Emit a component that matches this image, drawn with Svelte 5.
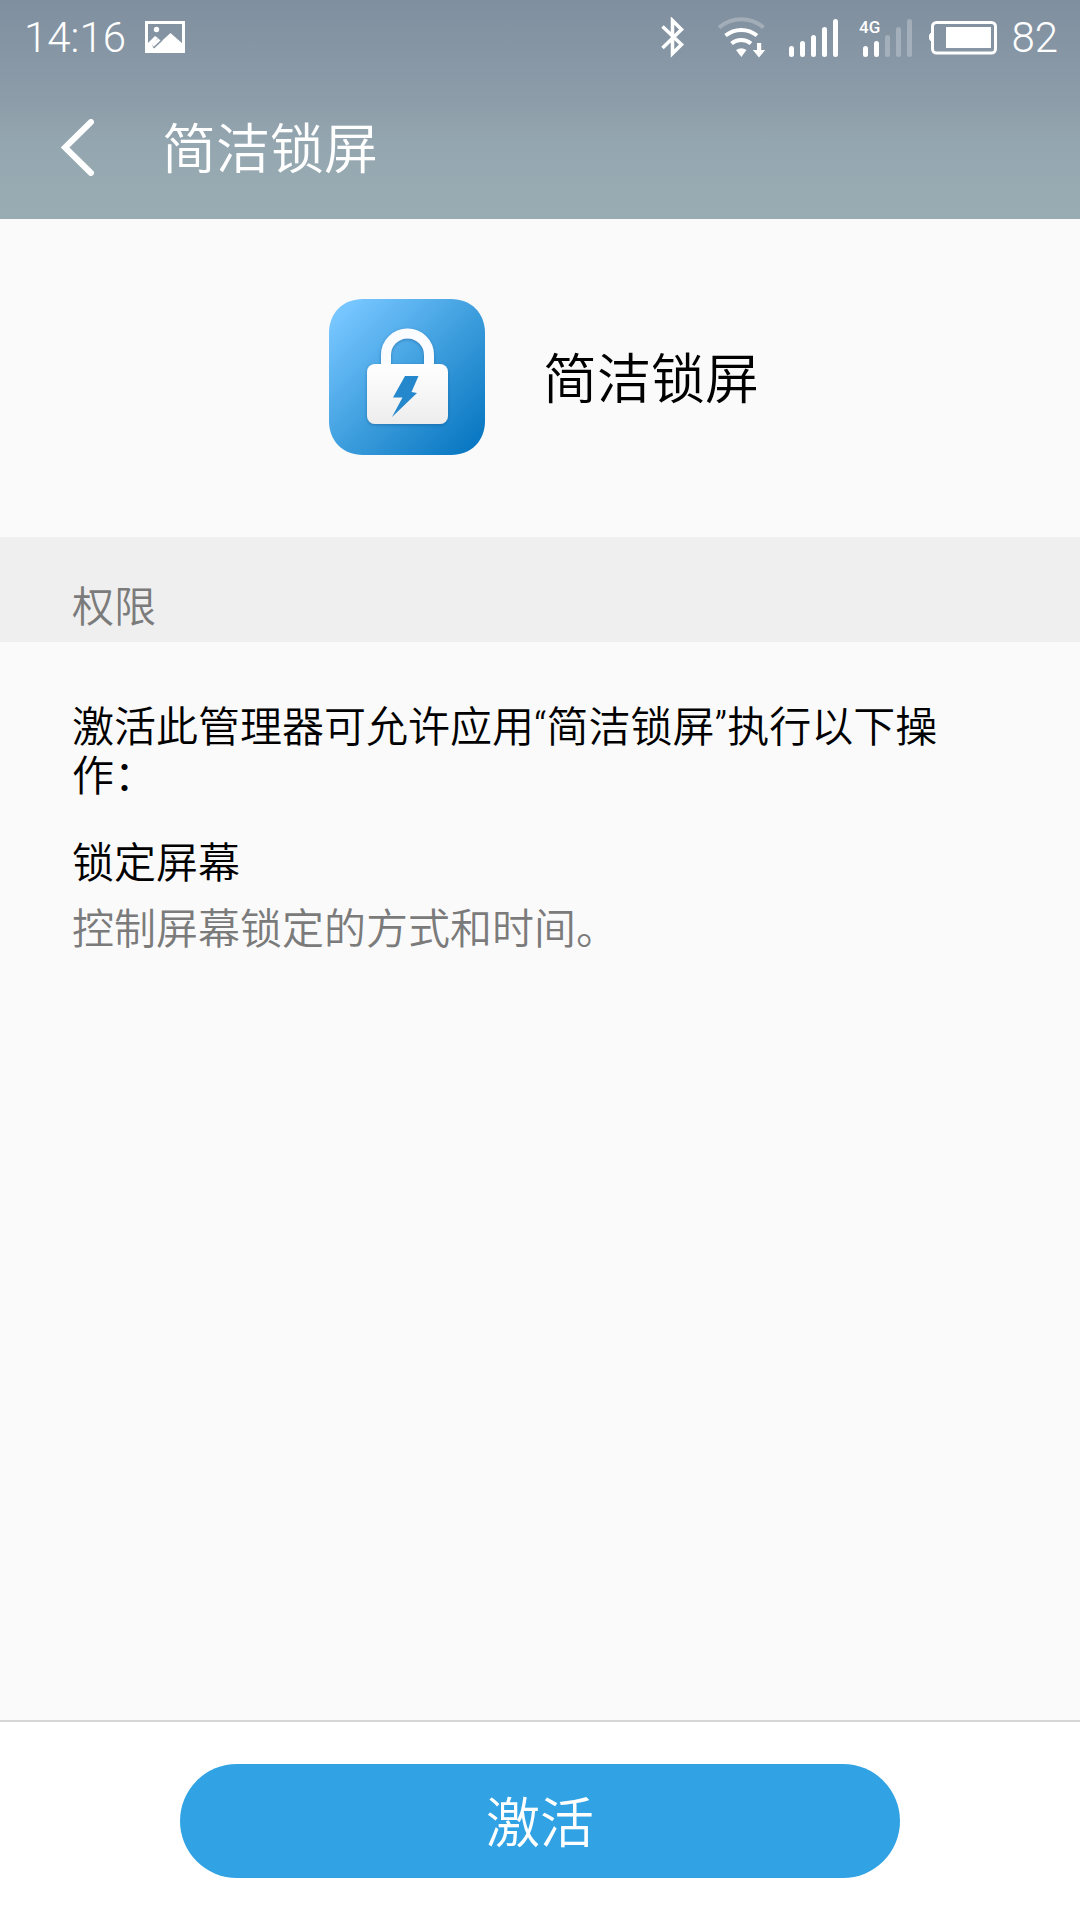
<script>
  const appName = '简洁锁屏';
  const battery = 82;
  const bars = [29, 24, 18, 10, 2];
  const policies = [{ title: '锁定屏幕', detail: '控制屏幕锁定的方式和时间。' }];
  let active = $state(false);
</script>

<div class="screen" lang="zh-CN">
  <header>
    <div class="status">
      <div class="group">
        <time>14:16</time>
        <svg width="40" height="33" viewBox="0 0 40 33" role="img" aria-label="截图">
          <path d="M1.5 1.5h37v29h-37z" fill="none" stroke="#fff" stroke-width="3" />
          <circle cx="11.5" cy="8.5" r="2.7" fill="#fff" />
          <path d="M2 23L10 15L13 17L7 24.500L9 27L25.500 12L38 23V31H2z" fill="#fff" />
          <path d="M14.500 18.500L8 25" stroke="#fff" stroke-width="3.500" />
          <path d="M17 19L8.500 27" stroke="#8594a3" stroke-width="1.500" />
        </svg>
      </div>
      <div class="group battery">
        <div class="group icons">
          <svg width="40" height="41" viewBox="0 0 40 41" role="img" aria-label="蓝牙">
            <path d="M1.500 9.500L20.500 27.500L11.500 36.500V3.500L20.500 12.500L1.500 31" fill="none" stroke="#fff" stroke-width="3.500" />
          </svg>
          <svg width="56" height="41" viewBox="0 0 56 41" role="img" aria-label="无线网络">
            <g fill="none" stroke="#fff" stroke-width="4">
              <path d="M2 10.500A34 34 0 0 1 46.500 10.500" opacity=".25" />
              <path d="M8.500 18.500A25 25 0 0 1 40 18.500" />
              <path d="M14.500 26.500A15 15 0 0 1 34 26.500" />
            </g>
            <path d="M19 33Q24.300 29.500 29.500 33L24.300 40z" fill="#fff" />
            <path d="M40 26h4.200v7h4L42 40.500L35.800 33h4.200z" fill="#fff" />
          </svg>
          <svg width="54" height="41" viewBox="0 0 54 41" role="img" aria-label="信号">
            {#each bars as top, i}
              <rect x={i * 11} y={top} width="5" height={40 - top} rx="2.5" fill="#fff" />
            {/each}
          </svg>
          <svg width="54" height="41" viewBox="0 0 54 41" role="img" aria-label="4G 信号">
            <text class="net" x="0" y="16">4G</text>
            {#each bars as top, i}
              <rect x={4 + i * 11} y={top} width="5" height={40 - top} rx="2.5" fill="#fff" opacity={i < 2 ? 1 : 0.25} />
            {/each}
          </svg>
          <svg width="68" height="41" viewBox="0 0 68 41" role="img" aria-label="电池">
            <rect x="3.5" y="5.5" width="63" height="30.5" rx="4" fill="none" stroke="#fff" stroke-width="3" />
            <path d="M3 16H1.500L0 18v4l1.500 2H3z" fill="#fff" />
            <rect x="17" y="10" width="45" height="21" fill="#fff" />
          </svg>
        </div>
        <span>{battery}</span>
      </div>
    </div>
    <div class="titlebar">
      <button class="back" type="button" aria-label="返回">
        <svg width="34" height="57" viewBox="0 0 34 57" aria-hidden="true">
          <path d="M30 3L4 28.500L30 54" fill="none" stroke="#fff" stroke-width="6" stroke-linecap="round" />
        </svg>
      </button>
      <h1>{appName}</h1>
    </div>
  </header>

  <main>
    <section class="app">
      <svg width="156" height="156" viewBox="0 0 156 156" aria-hidden="true">
        <defs>
          <linearGradient id="tile" x1="0" y1="0" x2="1" y2="1">
            <stop offset="0.08" stop-color="#77c6ff" />
            <stop offset="0.5" stop-color="#3f9fde" />
            <stop offset="0.92" stop-color="#0b79c3" />
          </linearGradient>
          <linearGradient id="body" x1="0" y1="0" x2="0" y2="1">
            <stop offset="0" stop-color="#fff" />
            <stop offset="1" stop-color="#ededee" />
          </linearGradient>
          <filter id="shade" x="-20%" y="-20%" width="140%" height="140%">
            <feDropShadow dx="0" dy="1" stdDeviation="1.500" flood-color="#0a4f86" flood-opacity=".5" />
          </filter>
        </defs>
        <path d="M34 0H122C142 0 156 14 156 34V122C156 142 142 156 122 156H34C14 156 0 142 0 122V34C0 14 14 0 34 0z" fill="url(#tile)" />
        <g filter="url(#shade)">
          <path d="M57 68V56A21.500 21.500 0 0 1 100 56V68" fill="none" stroke="#fbfcff" stroke-width="10" />
          <rect x="38" y="65" width="81" height="60" rx="8" fill="url(#body)" />
        </g>
        <path d="M76 77H89.500L82.500 93L88 94L63 118L73.500 98.500H64z" fill="#2588cc" />
      </svg>
      <h2>{appName}</h2>
    </section>

    <h3>权限</h3>

    <section class="details">
      <p class="intro">激活此管理器可允许应用“{appName}”执行以下操作：</p>
      <dl>
        {#each policies as policy}
          <dt>{policy.title}</dt>
          <dd>{policy.detail}</dd>
        {/each}
      </dl>
    </section>
  </main>

  <footer>
    <button class="activate" type="button" aria-pressed={active} onclick={() => (active = !active)}>激活</button>
  </footer>
</div>

<style>
  :global(body) {
    margin: 0;
    background: #fafafa;
  }
  .screen {
    display: flex;
    flex-direction: column;
    min-height: 100vh;
    color: #000;
    font-family: Roboto, 'Noto Sans CJK SC', sans-serif;
    font-size: 42px;
    font-weight: 350;
    line-height: 49px;
  }
  svg {
    display: block;
    flex: none;
  }
  h1,
  h2,
  h3,
  p,
  dl,
  dd {
    margin: 0;
    font-weight: 350;
  }
  header {
    background: linear-gradient(#808f9f, #8c9ca9 45%, #94a6af 65%, #9aacb3);
    color: #fff;
  }
  .status {
    display: flex;
    justify-content: space-between;
    align-items: center;
    height: 75px;
    padding: 0 22px 0 24px;
    font-weight: 300;
  }
  .group {
    display: flex;
    align-items: center;
    gap: 19px;
  }
  .icons {
    gap: 16px;
  }
  .battery {
    gap: 14px;
  }
  .net {
    fill: #fff;
    font-size: 17px;
    font-weight: 500;
  }
  .titlebar {
    display: flex;
    align-items: center;
    height: 144px;
    padding-left: 37px;
    gap: 43px;
  }
  .back {
    padding: 24px;
    border: 0;
    background: none;
  }
  h1,
  h2,
  .activate {
    padding: 8px 0 0;
    font-size: 54px;
    font-weight: 350;
    line-height: 64px;
  }
  main {
    flex: 1;
    background: #fafafa;
  }
  .app {
    display: flex;
    justify-content: center;
    align-items: center;
    gap: 58px;
    padding: 80px 0 82px 8px;
  }
  h3 {
    padding: 46px 72px 10px;
    background: #efefef;
    color: #7b7b7b;
    font-size: 42px;
  }
  .details {
    padding: 61px 72px;
  }
  dl {
    margin-top: 38px;
  }
  dd {
    margin-top: 17px;
    color: #7b7b7b;
  }
  footer {
    display: flex;
    justify-content: center;
    padding: 42px 180px;
    border-top: 2px solid #d5d7d6;
    background: #fff;
  }
  .activate {
    flex: 1;
    height: 114px;
    border: 0;
    border-radius: 57px;
    background: #31a3e5;
    color: #fff;
    font-family: inherit;
  }
</style>
